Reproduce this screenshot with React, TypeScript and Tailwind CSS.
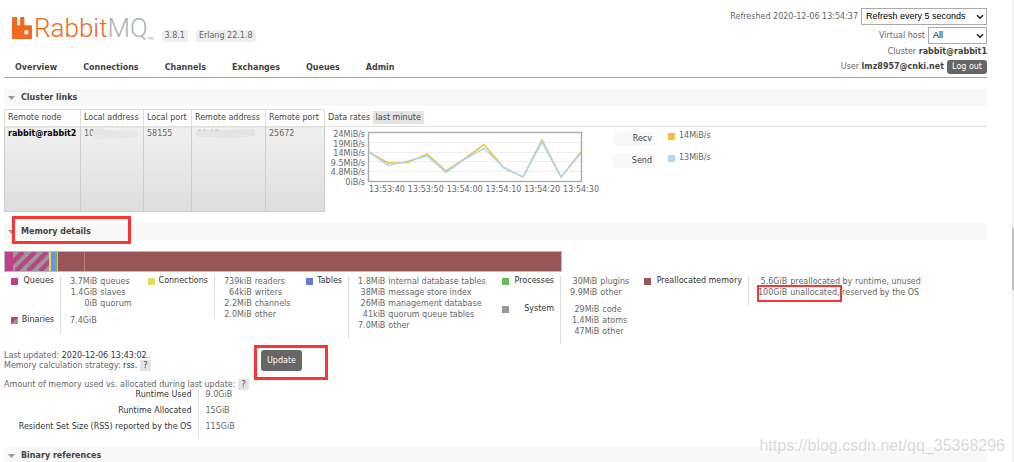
import React from "react";

const navItems = [
  "Overview",
  "Connections",
  "Channels",
  "Exchanges",
  "Queues",
  "Admin",
];

const yLabels = ["24MiB/s", "19MiB/s", "14MiB/s", "9.5MiB/s", "4.8MiB/s", "0iB/s"];

const xLabels = [
  "13:53:40",
  "13:53:50",
  "13:54:00",
  "13:54:10",
  "13:54:20",
  "13:54:30",
];

type Row = { amount: string; name: string };

function SelectArrow() {
  return (
    <svg
      className="pointer-events-none absolute right-[3px] top-1.5 h-[6px] w-[8px]"
      viewBox="0 0 8 6"
      fill="none"
      stroke="#222"
      strokeWidth="1.6"
    >
      <path d="M1 1.2 L4 4.2 L7 1.2" />
    </svg>
  );
}

function SectionTitle({ title, className = "" }: { title: string; className?: string }) {
  return (
    <h2
      className={`flex items-center bg-[#f8f8f8] pl-1 text-[8px] leading-[17px] font-bold text-[#444] ${className}`}
    >
      <svg className="mr-[6px] h-[4px] w-[7px]" viewBox="0 0 7 4" fill="#999">
        <path d="M0 0 H7 L3.5 4 Z" />
      </svg>
      {title}
    </h2>
  );
}

function Help() {
  return (
    <a href="#help" className="ml-[3px] bg-[#e4e4e4] px-[3px] py-px text-[#444]">
      ?
    </a>
  );
}

function Label({ color, children }: { color: string; children: React.ReactNode }) {
  return (
    <div className="flex items-start justify-between pl-[7px] pr-[6px] text-[#333]">
      <span className={`mt-[2px] h-[7px] w-[7px] ${color}`}></span>
      <span className="leading-[10px]">{children}</span>
    </div>
  );
}

function Amounts({ rows }: { rows: Row[] }) {
  return (
    <table className="border-collapse leading-[11px]">
      <tbody>
        {rows.map((row) => (
          <tr key={row.name}>
            <td className="p-0 text-right">{row.amount}</td>
            <td className="p-0 pl-[3px] whitespace-nowrap">{row.name}</td>
          </tr>
        ))}
      </tbody>
    </table>
  );
}

export default function App() {
  return (
    <div className="relative min-h-screen w-full overflow-hidden bg-white pl-1 pr-[27px] font-['DejaVu_Sans',Verdana,sans-serif] text-[8px] text-[#666]">
      <header className="flex items-stretch justify-between border-b border-[#aaa] pt-2">
        <div className="flex flex-col justify-between pb-[3px]">
          <div className="flex items-end pl-2 pt-1">
            <a href="#home" className="flex items-center" aria-label="RabbitMQ">
              <svg className="h-[22px] w-[20px]" viewBox="0 0 21 23" fill="#f26722">
                <path
                  fillRule="evenodd"
                  d="M1 0 H4.5 Q5.5 0 5.5 1 V8.5 H8.5 V1 Q8.5 0 9.5 0 H12 Q13 0 13 1 V8.5 H20 Q21 8.5 21 9.5 V22 Q21 23 20 23 H1 Q0 23 0 22 V1 Q0 0 1 0 Z M13 14 V18 H17 V14 Z"
                />
              </svg>
              <span className="ml-[2px] font-['Roboto',sans-serif] text-[26px] leading-[32px] font-light text-[#f26722]">
                Rabbit<span className="text-[#a9b5b0]">MQ</span>
              </span>
            </a>
            <span className="mb-[2px] text-[4px] text-[#a9b5b0]">TM</span>
            <span className="mb-[2px] ml-2 rounded-[3px] bg-[#eee] px-[3px] leading-[12px]">
              3.8.1
            </span>
            <span className="mb-[2px] ml-2 rounded-[3px] bg-[#eee] px-[3px] leading-[12px]">
              Erlang 22.1.8
            </span>
          </div>
          <nav className="flex gap-[26px] pl-[11px] font-bold text-[#444]">
            {navItems.map((item) => (
              <a key={item} href={`#${item.toLowerCase()}`} className="leading-[12px]">
                {item}
              </a>
            ))}
          </nav>
        </div>

        <div className="flex flex-col items-end pb-[3px]">
          <label className="flex items-center gap-[3px]">
            Refreshed 2020-12-06 13:54:37
            <span className="relative">
              <select className="block h-[17px] w-[126px] appearance-none border border-[#aaa] bg-white pl-1 font-['Liberation_Sans',Arial,sans-serif] text-[9px] text-black">
                <option>Refresh every 5 seconds</option>
              </select>
              <SelectArrow />
            </span>
          </label>
          <label className="mt-[2px] flex items-center gap-[3px]">
            Virtual host
            <span className="relative">
              <select className="block h-[17px] w-[59px] appearance-none border border-[#aaa] bg-white pl-1 font-['Liberation_Sans',Arial,sans-serif] text-[9px] text-black">
                <option>All</option>
              </select>
              <SelectArrow />
            </span>
          </label>
          <p className="leading-[16px]">
            Cluster <b className="text-[#444]">rabbit@rabbit1</b>
          </p>
          <p className="flex items-center gap-[3px]">
            <span>
              User <b className="text-[#444]">lmz8957@cnki.net</b>
            </span>
            <button className="rounded-[3px] bg-[#666] px-[5px] leading-[14px] text-white">
              Log out
            </button>
          </p>
        </div>
      </header>

      <SectionTitle title="Cluster links" className="mt-[11px]" />

      <table className="mt-[3px] w-full border-collapse text-left">
        <thead>
          <tr className="h-[17px] border-b border-[#ddd] text-[#444] *:p-0 *:pl-[3px] *:font-normal *:whitespace-nowrap">
            <th className="w-[76px] border border-[#ddd]">Remote node</th>
            <th className="w-[63px] border border-[#ddd]">Local address</th>
            <th className="w-[48px] border border-[#ddd]">Local port</th>
            <th className="w-[74px] border border-[#ddd]">Remote address</th>
            <th className="w-[59px] border border-[#ddd]">Remote port</th>
            <th>
              Data rates{" "}
              <button className="bg-[#e4e4e4] px-[3px] leading-[13px]">last minute</button>
            </th>
          </tr>
        </thead>
        <tbody>
          <tr className="h-[85px] align-top leading-[13px] *:p-0 *:pl-[3px]">
            <td className="border border-[#ccc] bg-linear-to-b from-[#f0f0f0] to-[#ddd] font-bold text-black">
              rabbit@rabbit2
            </td>
            <td className="border border-[#ccc] bg-linear-to-b from-[#f0f0f0] to-[#ddd]">
              <div className="flex items-center">
                10
                <svg className="-ml-[3px] h-[12px] w-[50px]" viewBox="0 0 50 12" fill="#e6e6e6">
                  <path d="M3 2 Q9 -1 14 2 L46 3 Q50 6 46 9 L14 11 Q6 13 2 9 Q-1 5 3 2 Z" />
                </svg>
              </div>
            </td>
            <td className="border border-[#ccc] bg-linear-to-b from-[#f0f0f0] to-[#ddd]">58155</td>
            <td className="border border-[#ccc] bg-linear-to-b from-[#f0f0f0] to-[#ddd]">
              <svg className="h-[12px] w-[62px]" viewBox="0 0 62 12">
                <path d="M2 3 H24 L60 2 V9 Q40 12 18 10 L2 10 Q-1 6 2 3 Z" fill="#e4e4e4" />
                <path d="M3 3 H6 M8 3 H11 M16 3 H18 M20 3 H24" stroke="#bbb" />
              </svg>
            </td>
            <td className="border border-[#ccc] bg-linear-to-b from-[#f0f0f0] to-[#ddd]">25672</td>
            <td>
              <div className="flex pt-[2px]">
                <div className="mt-px flex h-[57px] w-[39px] flex-col items-end justify-between pr-[2px] leading-[9px]">
                  {yLabels.map((label) => (
                    <span key={label}>{label}</span>
                  ))}
                </div>
                <div className="w-[247px] pt-[2px]">
                  <svg className="h-[52px] w-[216px]" viewBox="367 131 216 52" fill="none">
                    <path
                      d="M369 142.5 H581 M369 152.5 H581 M369 161.5 H581 M369 171.5 H581"
                      stroke="#eee"
                    />
                    <path
                      d="M369 152 L388 163 L408 162.5 L427 154 L446 171 L465 158.5 L484 144.5 L504 168 L523 177 L542 140 L561 177 L581 152"
                      stroke="#edc240"
                      strokeWidth="1.6"
                    />
                    <path
                      d="M369 152 L388 165.5 L408 161 L427 156 L446 172.5 L465 159 L484 148.5 L504 167.5 L523 177 L542 142 L561 177 L581 153"
                      stroke="#afd8f8"
                      strokeWidth="1.6"
                    />
                    <rect x="368.5" y="132.5" width="213" height="49" stroke="#aaa" strokeWidth="1.4" />
                  </svg>
                  <div className="flex w-[232px] justify-between pl-[2px] leading-[14px]">
                    {xLabels.map((label) => (
                      <span key={label}>{label}</span>
                    ))}
                  </div>
                </div>
                <div className="flex flex-col gap-2 pt-[3px] text-[#444]">
                  <button className="w-[41px] rounded-[2px] bg-[#f8f8f8] pr-[3px] text-right leading-[14px]">
                    Recv
                  </button>
                  <button className="w-[41px] rounded-[2px] bg-[#f8f8f8] pr-[3px] text-right leading-[14px]">
                    Send
                  </button>
                </div>
                <div className="ml-[13px] flex flex-col gap-2 leading-[14px]">
                  <span className="flex items-center gap-[4px]">
                    <i className="h-[7px] w-[7px] bg-[#edc240]"></i>14MiB/s
                  </span>
                  <span className="flex items-center gap-[4px]">
                    <i className="h-[7px] w-[7px] bg-[#afd8f8]"></i>13MiB/s
                  </span>
                </div>
              </div>
            </td>
          </tr>
        </tbody>
      </table>

      <div className="relative mt-[11px]">
        <SectionTitle title="Memory details" />
        <div className="absolute -top-[7px] left-2 h-[28px] w-[119px] border-3 border-[#fb3434]"></div>
      </div>

      <div className="mt-[11px] flex h-[21px] w-[558px] border border-[#bbb]">
        <div className="w-[8px] bg-[#bc4189]"></div>
        <svg className="h-full w-[36px]" viewBox="0 0 36 19" preserveAspectRatio="none">
          <rect width="36" height="19" fill="#999" />
          <path
            d="M-9 19 L10 0 M3 19 L22 0 M15 19 L34 0 M27 19 L46 0"
            stroke="#bc4189"
            strokeWidth="4.5"
          />
        </svg>
        <div className="w-[2px] bg-[#dcdc68]"></div>
        <div className="w-[4px] bg-[#6f90e8]"></div>
        <div className="w-[2px] bg-[#67bd5c]"></div>
        <div className="w-[1px] bg-[#bbb]"></div>
        <div className="w-[27px] border-r border-[#b58080] bg-[#955]"></div>
        <div className="flex-1 bg-[#955]"></div>
      </div>

      <div className="mt-1 flex h-[69px] items-start">
        <div className="flex w-[137px]">
          <div className="flex h-[57px] w-[57px] flex-col gap-[29px] border-r border-[#ddd]">
            <Label color="bg-[#bc4189]">Queues</Label>
            <Label color="bg-linear-135 from-[#bc4189] from-50% to-[#999] to-50%">Binaries</Label>
          </div>
          <div className="pl-[9px]">
            <Amounts
              rows={[
                { amount: "3.7MiB", name: "queues" },
                { amount: "1.4GiB", name: "slaves" },
                { amount: "0iB", name: "quorum" },
              ]}
            />
            <p className="mt-[6px] leading-[11px]">7.4GiB</p>
          </div>
        </div>

        <div className="flex w-[158px]">
          <div className="h-[42px] w-[74px] border-r border-[#ddd]">
            <Label color="bg-[#dcdc68]">Connections</Label>
          </div>
          <div className="pl-[9px]">
            <Amounts
              rows={[
                { amount: "739kiB", name: "readers" },
                { amount: "64kiB", name: "writers" },
                { amount: "2.2MiB", name: "channels" },
                { amount: "2.0MiB", name: "other" },
              ]}
            />
          </div>
        </div>

        <div className="flex w-[196px]">
          <div className="h-[62px] w-[50px] border-r border-[#ddd]">
            <Label color="bg-[#6679e0]">Tables</Label>
          </div>
          <div className="pl-[9px]">
            <Amounts
              rows={[
                { amount: "1.8MiB", name: "internal database tables" },
                { amount: "38MiB", name: "message store index" },
                { amount: "26MiB", name: "management database" },
                { amount: "41kiB", name: "quorum queue tables" },
                { amount: "7.0MiB", name: "other" },
              ]}
            />
          </div>
        </div>

        <div className="flex w-[142px]">
          <div className="flex h-[68px] w-[66px] flex-col gap-[18px] border-r border-[#ddd]">
            <Label color="bg-[#67bd5c]">Processes</Label>
            <Label color="bg-[#999]">System</Label>
          </div>
          <div className="flex flex-col gap-[6px] pl-[9px]">
            <Amounts
              rows={[
                { amount: "30MiB", name: "plugins" },
                { amount: "9.9MiB", name: "other" },
              ]}
            />
            <Amounts
              rows={[
                { amount: "29MiB", name: "code" },
                { amount: "1.4MiB", name: "atoms" },
                { amount: "47MiB", name: "other" },
              ]}
            />
          </div>
        </div>

        <div className="flex">
          <div className="h-[29px] w-[112px] border-r border-[#ddd]">
            <Label color="bg-[#955]">Preallocated memory</Label>
          </div>
          <div className="relative pl-[9px]">
            <Amounts
              rows={[
                { amount: "5.6GiB", name: "preallocated by runtime, unused" },
                { amount: "100GiB", name: "unallocated, reserved by the OS" },
              ]}
            />
            <div className="absolute left-2 top-[9px] h-[17px] w-[85px] border-2 border-[#fb3434]"></div>
          </div>
        </div>
      </div>

      <div className="mt-[5px] flex leading-[10px]">
        <div className="w-[257px] pt-px">
          <p>
            Last updated: <span className="text-[#333]">2020-12-06 13:43:02.</span>
          </p>
          <p>
            Memory calculation strategy: <span className="text-[#333]">rss.</span>
            <Help />
          </p>
        </div>
        <div className="relative">
          <button className="rounded-[3px] bg-[#666] px-[6px] leading-[21px] text-white">
            Update
          </button>
          <div className="absolute -left-[7px] -top-[5px] h-[35px] w-[74px] border-3 border-[#fb3434]"></div>
        </div>
      </div>

      <p className="mt-2 leading-[11px]">
        Amount of memory used vs. allocated during last update:
        <Help />
      </p>

      <table className="border-collapse leading-[10px]">
        <tbody>
          <tr className="h-[16px] align-top">
            <th className="w-[194px] border-r border-[#ddd] p-0 pr-[6px] text-right font-normal text-[#333]">
              Runtime Used
            </th>
            <td className="p-0 pl-[7px]">9.0GiB</td>
          </tr>
          <tr className="h-[16px] align-top">
            <th className="border-r border-[#ddd] p-0 pr-[6px] text-right font-normal text-[#333]">
              Runtime Allocated
            </th>
            <td className="p-0 pl-[7px]">15GiB</td>
          </tr>
          <tr className="h-[16px] align-top">
            <th className="border-r border-[#ddd] p-0 pr-[6px] text-right font-normal text-[#333]">
              Resident Set Size (RSS) reported by the OS
            </th>
            <td className="p-0 pl-[7px]">115GiB</td>
          </tr>
        </tbody>
      </table>

      <SectionTitle title="Binary references" className="mt-[9px]" />

      <div className="absolute top-0 right-0 h-full w-[2px] bg-[#f1f1f1] pt-[228px]">
        <div className="h-[62px] bg-[#c1c1c1]"></div>
      </div>
      <p className="absolute right-[9px] bottom-2 font-['Liberation_Sans',Arial,sans-serif] text-[16px] leading-[20px] text-[#dadada] [text-shadow:1px_1px_0_#fff]">
        https://blog.csdn.net/qq_35368296
      </p>
    </div>
  );
}
